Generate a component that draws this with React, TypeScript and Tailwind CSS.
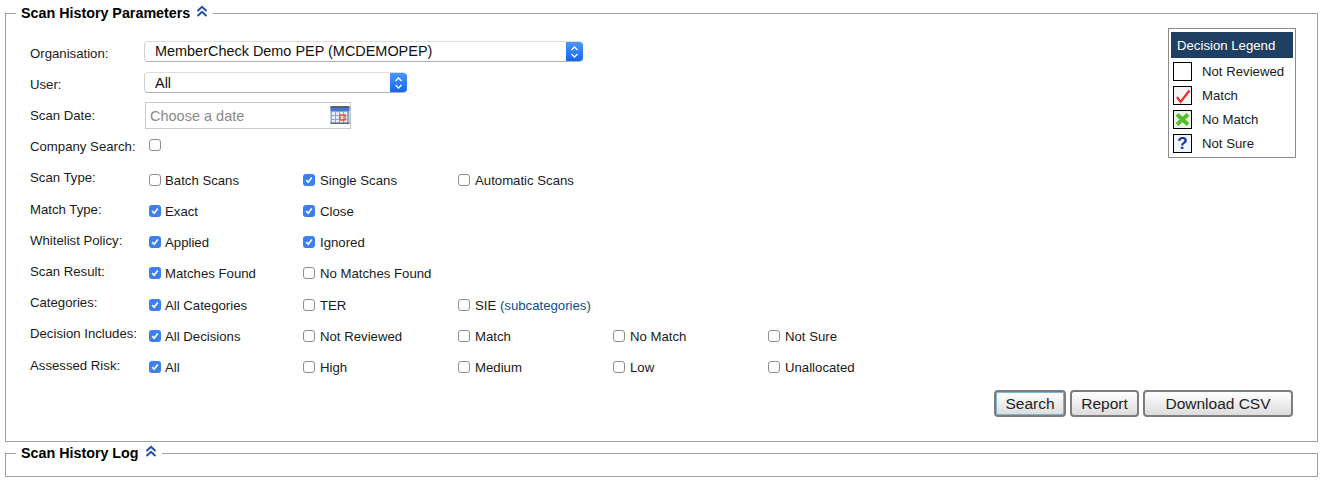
import React from "react";

const font = "font-['Liberation_Sans',Arial,sans-serif]";

function Chevrons() {
  return (
    <svg width="12" height="12" viewBox="0 0 12 12" className="inline-block align-top" fill="none" stroke="#1f4fa8" strokeWidth="2">
      <path d="M1.5 6 L6 1.8 L10.5 6" />
      <path d="M1.5 11 L6 6.8 L10.5 11" />
    </svg>
  );
}

function Check({ checked = false }: { checked?: boolean }) {
  if (checked) {
    return (
      <span className="w-3 h-3 rounded-[3px] bg-[#3b7ff0] flex items-center justify-center shrink-0">
        <svg width="10" height="10" viewBox="0 0 10 10" fill="none" stroke="#fff" strokeWidth="1.7">
          <path d="M2.2 5.2 L4.2 7.2 L7.8 2.6" />
        </svg>
      </span>
    );
  }
  return <span className="block w-3 h-3 rounded-[3px] bg-white border border-[#8e8e8e] shrink-0" />;
}

type Opt = { t: React.ReactNode; c?: boolean };

function OptRow({
  label,
  opts,
  h = "h-[31px]",
  labelPt = "pt-[5px]",
}: {
  label: string;
  opts: Opt[];
  h?: string;
  labelPt?: string;
}) {
  return (
    <div className={`flex ${h}`}>
      <div className={`w-[119px] ${labelPt} text-[13.2px] leading-[15px] text-[#1a1a1a]`}>{label}</div>
      {opts.map((o, i) => (
        <div
          key={i}
          className={`${i === 0 ? "w-[154px] gap-[4px]" : "w-[155px] gap-[5px]"} flex items-start pt-[8px] text-[13.2px] leading-[15px] text-[#1a1a1a]`}
        >
          <span className="block mt-[1px]"><Check checked={o.c} /></span>
          <span>{o.t}</span>
        </div>
      ))}
    </div>
  );
}

function SelectBox({ text, width, leading = "leading-[19px]" }: { text: string; width: string; leading?: string }) {
  return (
    <div className={`${width} h-[21px] ml-[-5px] flex rounded-[4px] bg-white border-y border-l border-t-[#dcdcdc] border-b-[#b0b0b0] border-l-[#d0d0d0] overflow-hidden`}>
      <div className={`flex-1 pl-[10px] text-[14.45px] ${leading} text-[#111]`}>{text}</div>
      <div className="w-[17px] -my-px bg-gradient-to-b from-[#4f98fb] to-[#0f62f2] flex items-center justify-center">
        <svg width="9" height="14" viewBox="0 0 9 14" fill="none" stroke="#fff" strokeWidth="1.3">
          <path d="M1.5 5 L4.5 2 L7.5 5" />
          <path d="M1.5 9 L4.5 12 L7.5 9" />
        </svg>
      </div>
    </div>
  );
}

function CalendarIcon() {
  return (
    <svg width="20" height="20" viewBox="0 0 20 20" className="shrink-0 mt-[-1px]">
      <rect x="0.5" y="1" width="19" height="18" fill="#8ea8cc" />
      <rect x="0.5" y="1" width="19" height="2" fill="#555f70" />
      <rect x="0.5" y="3" width="19" height="3" fill="#3f78d6" />
      {[7, 11, 15].map((y) =>
        [2, 6, 10, 14].map((x) => <rect key={`${x}-${y}`} x={x} y={y} width="3" height="3" fill="#e6edf7" />)
      )}
      <rect x="10" y="10" width="5" height="5" fill="none" stroke="#e8562a" strokeWidth="1.4" />
      <rect x="0.5" y="17.5" width="19" height="1.5" fill="#56698c" />
    </svg>
  );
}

function LegendIcon({ children, bg = "bg-white" }: { children?: React.ReactNode; bg?: string }) {
  return (
    <span className={`w-[19px] h-[19px] border border-black ${bg} flex items-center justify-center shrink-0`}>{children}</span>
  );
}

function DecisionLegend() {
  const rows: [React.ReactNode, string, string][] = [
    [null, "Not Reviewed", "bg-white"],
    [
      <svg width="16" height="16" viewBox="0 0 16 16" fill="none" stroke="#ee2b2b" strokeWidth="2.2">
        <path d="M2 9 L5.5 14 L14.5 2.5" />
      </svg>,
      "Match",
      "bg-[#f6f6f6]",
    ],
    [
      <svg width="15" height="15" viewBox="0 0 15 15" fill="none" stroke="#52c026" strokeWidth="3.8">
        <path d="M2 2.5 L13 12.5 M13 2.5 L2 12.5" />
      </svg>,
      "No Match",
      "bg-[#eef2ea]",
    ],
    [<span className="text-[17px] leading-[17px] font-bold text-[#1c2f9c]">?</span>, "Not Sure", "bg-[#f2f5fb]"],
  ];
  return (
    <div className="w-[128px] h-[130px] mt-[-13px] mr-[21px] border border-[#8c8c8c] px-[2px] pt-[3px] bg-white shrink-0">
      <div className="h-[26px] bg-[#1f4063] text-white text-[13.2px] leading-[27px] pl-[6px]">Decision Legend</div>
      <div className="flex flex-col gap-[5px] pt-[4px] pl-[2px]">
        {rows.map(([icon, text, bg], i) => (
          <div key={i} className="flex items-center h-[19px] gap-[10px] text-[13.2px] leading-[19px] text-[#1a1a1a]">
            <LegendIcon bg={bg}>{icon}</LegendIcon>
            <span>{text}</span>
          </div>
        ))}
      </div>
    </div>
  );
}

function Btn({ children, w, focus }: { children: React.ReactNode; w: string; focus?: boolean }) {
  return (
    <button
      className={`${w} h-[27px] rounded-[4px] border-2 border-[#7d7d7d] bg-gradient-to-b from-white to-[#dcdcdc] text-[15.5px] leading-[21px] text-[#222] ${
        focus ? "shadow-[inset_0_0_0_1px_#7fb2cc]" : ""
      }`}
    >
      {children}
    </button>
  );
}

function Title({ children }: { children: React.ReactNode }) {
  return (
    <legend className="ml-[10px] px-[5px] text-[14.3px] leading-[16px] font-bold text-black">
      {children} <span className="relative top-0 ml-[2px]"><Chevrons /></span>
    </legend>
  );
}

export default function App() {
  return (
    <div className={`${font} w-[1323px] h-[482px] overflow-hidden bg-white`}>
      <div className="px-[5px] pt-[5px] flex flex-col gap-[3px]">
        <fieldset className="h-[437px] border border-[#a0a0a0]">
          <Title>Scan History Parameters</Title>
          <div className="flex pt-[20px]">
            <div className="flex-1 pl-[24px]">
              <div className="flex h-[31px]">
                <div className="w-[119px] pt-[5px] text-[13.2px] leading-[15px] text-[#1a1a1a]">Organisation:</div>
                <SelectBox text="MemberCheck Demo PEP (MCDEMOPEP)" width="w-[439px]" />
              </div>
              <div className="flex h-[31px]">
                <div className="w-[119px] pt-[5px] text-[13.2px] leading-[15px] text-[#1a1a1a]">User:</div>
                <SelectBox text="All" width="w-[263px]" leading="leading-[21px]" />
              </div>
              <div className="flex h-[31px]">
                <div className="w-[119px] pt-[5px] text-[13.2px] leading-[15px] text-[#1a1a1a]">Scan Date:</div>
                <div className="w-[206px] h-[27px] ml-[-4px] mt-[-1px] border border-[#c9c9c9] flex items-center pl-[4px]">
                  <span className="flex-1 pt-[2px] text-[14.5px] text-[#8a8a8a]">Choose a date</span>
                  <CalendarIcon />
                </div>
              </div>
              <div className="flex h-[31px]">
                <div className="w-[119px] pt-[5px] text-[13.2px] leading-[15px] text-[#1a1a1a]">Company Search:</div>
                <span className="block pt-[5px]"><Check /></span>
              </div>
              <OptRow label="Scan Type:" opts={[{ t: "Batch Scans" }, { t: "Single Scans", c: true }, { t: "Automatic Scans" }]} />
              <OptRow labelPt="pt-[6px]" label="Match Type:" opts={[{ t: "Exact", c: true }, { t: "Close", c: true }]} />
              <OptRow labelPt="pt-[6px]" label="Whitelist Policy:" opts={[{ t: "Applied", c: true }, { t: "Ignored", c: true }]} />
              <OptRow labelPt="pt-[6px]" h="h-[32px]" label="Scan Result:" opts={[{ t: "Matches Found", c: true }, { t: "No Matches Found" }]} />
              <OptRow
                label="Categories:"
                opts={[
                  { t: "All Categories", c: true },
                  { t: "TER" },
                  { t: <>SIE <span className="text-[#0b4c8c]">(subcategories)</span></> },
                ]}
              />
              <OptRow
                label="Decision Includes:"
                opts={[
                  { t: "All Decisions", c: true },
                  { t: "Not Reviewed" },
                  { t: "Match" },
                  { t: "No Match" },
                  { t: "Not Sure" },
                ]}
              />
              <OptRow
                labelPt="pt-[6px]"
                label="Assessed Risk:"
                opts={[{ t: "All", c: true }, { t: "High" }, { t: "Medium" }, { t: "Low" }, { t: "Unallocated" }]}
              />
            </div>
            <DecisionLegend />
          </div>
          <div className="flex justify-end gap-[4px] pr-[24px] pt-[7px]">
            <Btn w="w-[72px]" focus>Search</Btn>
            <Btn w="w-[69px]">Report</Btn>
            <Btn w="w-[150px]">Download CSV</Btn>
          </div>
        </fieldset>
        <fieldset className="h-[32px] border border-[#a0a0a0]">
          <Title>Scan History Log</Title>
        </fieldset>
      </div>
    </div>
  );
}
